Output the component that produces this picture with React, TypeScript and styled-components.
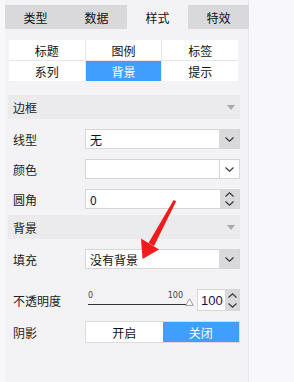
import React from "react";
import styled, { createGlobalStyle } from "styled-components";

const Global = createGlobalStyle`
  html, body { margin: 0; padding: 0; background: #f8f8fc; }
  body { font-family: "Noto Sans CJK SC", "Noto Sans", sans-serif; font-size: 12px; color: #222; }
`;

const Page = styled.div`
  position: relative;
  width: 294px;
  height: 382px;
  overflow: hidden;
`;

const Panel = styled.div`
  margin-left: 5px;
  width: 244px;
  height: 382px;
  background: #f3f3f5;
  border-right: 1px solid #e8e8ec;
  padding-top: 5px;
  box-sizing: border-box;
`;

const TabBar = styled.div`
  display: grid;
  grid-template-columns: repeat(4, 61px);
  height: 24px;
`;

const Tab = styled.div<{ $active?: boolean }>`
  display: flex;
  align-items: center;
  justify-content: center;
  background: ${(p) => (p.$active ? "#f3f3f5" : "#d9d9db")};
  font-size: 12px;
  color: #111;
`;

const SubGrid = styled.div`
  margin: 11px 10px 0 4px;
  display: grid;
  grid-template-columns: repeat(3, 1fr);
  grid-auto-rows: 20px;
  gap: 1px;
  background: #e6e6e8;
  padding: 0 0 0 0;
`;

const SubTab = styled.div<{ $active?: boolean }>`
  display: flex;
  align-items: center;
  justify-content: center;
  background: ${(p) => (p.$active ? "#409eff" : "#fff")};
  color: ${(p) => (p.$active ? "#fff" : "#111")};
`;

const Body = styled.div`
  margin-left: 3px;
  width: 232px;
`;

const SectionHeader = styled.div<{ $mt: number }>`
  margin-top: ${(p) => p.$mt}px;
  height: 24px;
  background: #ebebed;
  display: flex;
  align-items: center;
  justify-content: space-between;
  padding: 0 5px 0 5px;
  box-sizing: border-box;
`;

const Caret = styled.span`
  width: 0;
  height: 0;
  border-left: 4px solid transparent;
  border-right: 4px solid transparent;
  border-top: 5px solid #a9a9ab;
  margin-right: 0px;
`;

const Row = styled.div<{ $mt: number; $h?: number }>`
  margin-top: ${(p) => p.$mt}px;
  height: ${(p) => p.$h ?? 20}px;
  display: flex;
  align-items: center;
`;

const Label = styled.div`
  width: 77px;
  padding-left: 5px;
  box-sizing: border-box;
  flex: none;
`;

const Field = styled.div`
  width: 155px;
  height: 100%;
  display: flex;
  border: 1px solid #d6d6d8;
  box-sizing: border-box;
  background: #fff;
`;

const FieldText = styled.div<{ $color?: string }>`
  flex: 1;
  display: flex;
  align-items: center;
  padding-left: 4px;
  color: ${(p) => p.$color ?? "#111"};
`;

const DropBtn = styled.div<{ $plain?: boolean }>`
  width: 19px;
  display: flex;
  align-items: center;
  justify-content: center;
  background: ${(p) => (p.$plain ? "#fff" : "#d9d9db")};
  border-left: 1px solid ${(p) => (p.$plain ? "#d6d6d8" : "#d9d9db")};
`;

const Spin = styled.div`
  width: 19px;
  display: flex;
  flex-direction: column;
  align-items: center;
  justify-content: space-around;
  background: #d9d9db;
`;

const Chevron = ({ up }: { up?: boolean }) => (
  <svg width="9" height="5" viewBox="0 0 9 5">
    <polyline
      points={up ? "0.5,4.5 4.5,0.8 8.5,4.5" : "0.5,0.5 4.5,4.2 8.5,0.5"}
      fill="none"
      stroke="#333"
      strokeWidth="1.1"
    />
  </svg>
);

const SliderWrap = styled.div`
  width: 107px;
  height: 100%;
  position: relative;
  flex: none;
  display: flex;
  flex-direction: column;
  justify-content: flex-end;
  padding-left: 3px;
  box-sizing: border-box;
`;

const SliderLabels = styled.div`
  display: flex;
  justify-content: space-between;
  width: 95px;
  font-family: "DejaVu Sans", sans-serif;
  font-size: 8px;
  color: #444;
  line-height: 10px;
`;

const Track = styled.div`
  margin-top: 3px;
  margin-bottom: 6px;
  width: 102px;
  height: 1px;
  background: #333;
  position: relative;
`;

const Thumb = styled.svg`
  position: absolute;
  right: -4px;
  top: -6px;
`;

const NumBox = styled.div`
  width: 44px;
  height: 22px;
  margin-left: 5px;
  display: flex;
  border: 1px solid #d6d6d8;
  box-sizing: border-box;
  background: #fff;
`;

const NumText = styled.div`
  flex: 1;
  display: flex;
  align-items: center;
  padding-left: 3px;
  color: #14105a;
  font-family: "Liberation Sans", sans-serif;
  font-size: 13px;
`;

const Toggle = styled.div`
  width: 155px;
  height: 100%;
  display: grid;
  grid-template-columns: 1fr 1fr;
  border: 1px solid #dcdcde;
  box-sizing: border-box;
  background: #fff;
`;

const ToggleOpt = styled.div<{ $on?: boolean }>`
  display: flex;
  align-items: center;
  justify-content: center;
  font-size: 12px;
  background: ${(p) => (p.$on ? "#409eff" : "#fff")};
  color: ${(p) => (p.$on ? "#fff" : "#111")};
`;

const Arrow = styled.svg`
  position: absolute;
  left: 0;
  top: 0;
  pointer-events: none;
`;

export default function App() {
  return (
    <Page>
      <Global />
      <Panel>
        <TabBar>
          <Tab>类型</Tab>
          <Tab>数据</Tab>
          <Tab $active>样式</Tab>
          <Tab>特效</Tab>
        </TabBar>
        <SubGrid>
          <SubTab>标题</SubTab>
          <SubTab>图例</SubTab>
          <SubTab>标签</SubTab>
          <SubTab>系列</SubTab>
          <SubTab $active>背景</SubTab>
          <SubTab>提示</SubTab>
        </SubGrid>
        <Body>
          <SectionHeader $mt={14}>
            <span>边框</span>
            <Caret />
          </SectionHeader>
          <Row $mt={10}>
            <Label>线型</Label>
            <Field>
              <FieldText>无</FieldText>
              <DropBtn>
                <Chevron />
              </DropBtn>
            </Field>
          </Row>
          <Row $mt={10}>
            <Label>颜色</Label>
            <Field>
              <FieldText />
              <DropBtn $plain>
                <Chevron />
              </DropBtn>
            </Field>
          </Row>
          <Row $mt={10}>
            <Label>圆角</Label>
            <Field>
              <FieldText $color="#14105a">0</FieldText>
              <Spin>
                <Chevron up />
                <Chevron />
              </Spin>
            </Field>
          </Row>
          <SectionHeader $mt={6}>
            <span>背景</span>
            <Caret />
          </SectionHeader>
          <Row $mt={10}>
            <Label>填充</Label>
            <Field>
              <FieldText>没有背景</FieldText>
              <DropBtn>
                <Chevron />
              </DropBtn>
            </Field>
          </Row>
          <Row $mt={20} $h={22}>
            <Label>不透明度</Label>
            <SliderWrap>
              <SliderLabels>
                <span>0</span>
                <span>100</span>
              </SliderLabels>
              <Track>
                <Thumb width="9" height="8" viewBox="0 0 9 8">
                  <polygon points="4.5,0.8 8.3,7.4 0.7,7.4" fill="#fff" stroke="#999" strokeWidth="1" />
                </Thumb>
              </Track>
            </SliderWrap>
            <NumBox>
              <NumText>100</NumText>
              <Spin style={{ width: 14 }}>
                <Chevron up />
                <Chevron />
              </Spin>
            </NumBox>
          </Row>
          <Row $mt={10} $h={22}>
            <Label>阴影</Label>
            <Toggle>
              <ToggleOpt>开启</ToggleOpt>
              <ToggleOpt $on>关闭</ToggleOpt>
            </Toggle>
          </Row>
        </Body>
      </Panel>
      <Arrow width="294" height="382" viewBox="0 0 294 382">
        <polygon points="173.6,200 176.2,201.2 154,246 148.5,243" fill="#f21b1b" />
        <polygon points="141,238.5 159,249.5 142.5,259" fill="#f21b1b" />
      </Arrow>
    </Page>
  );
}
